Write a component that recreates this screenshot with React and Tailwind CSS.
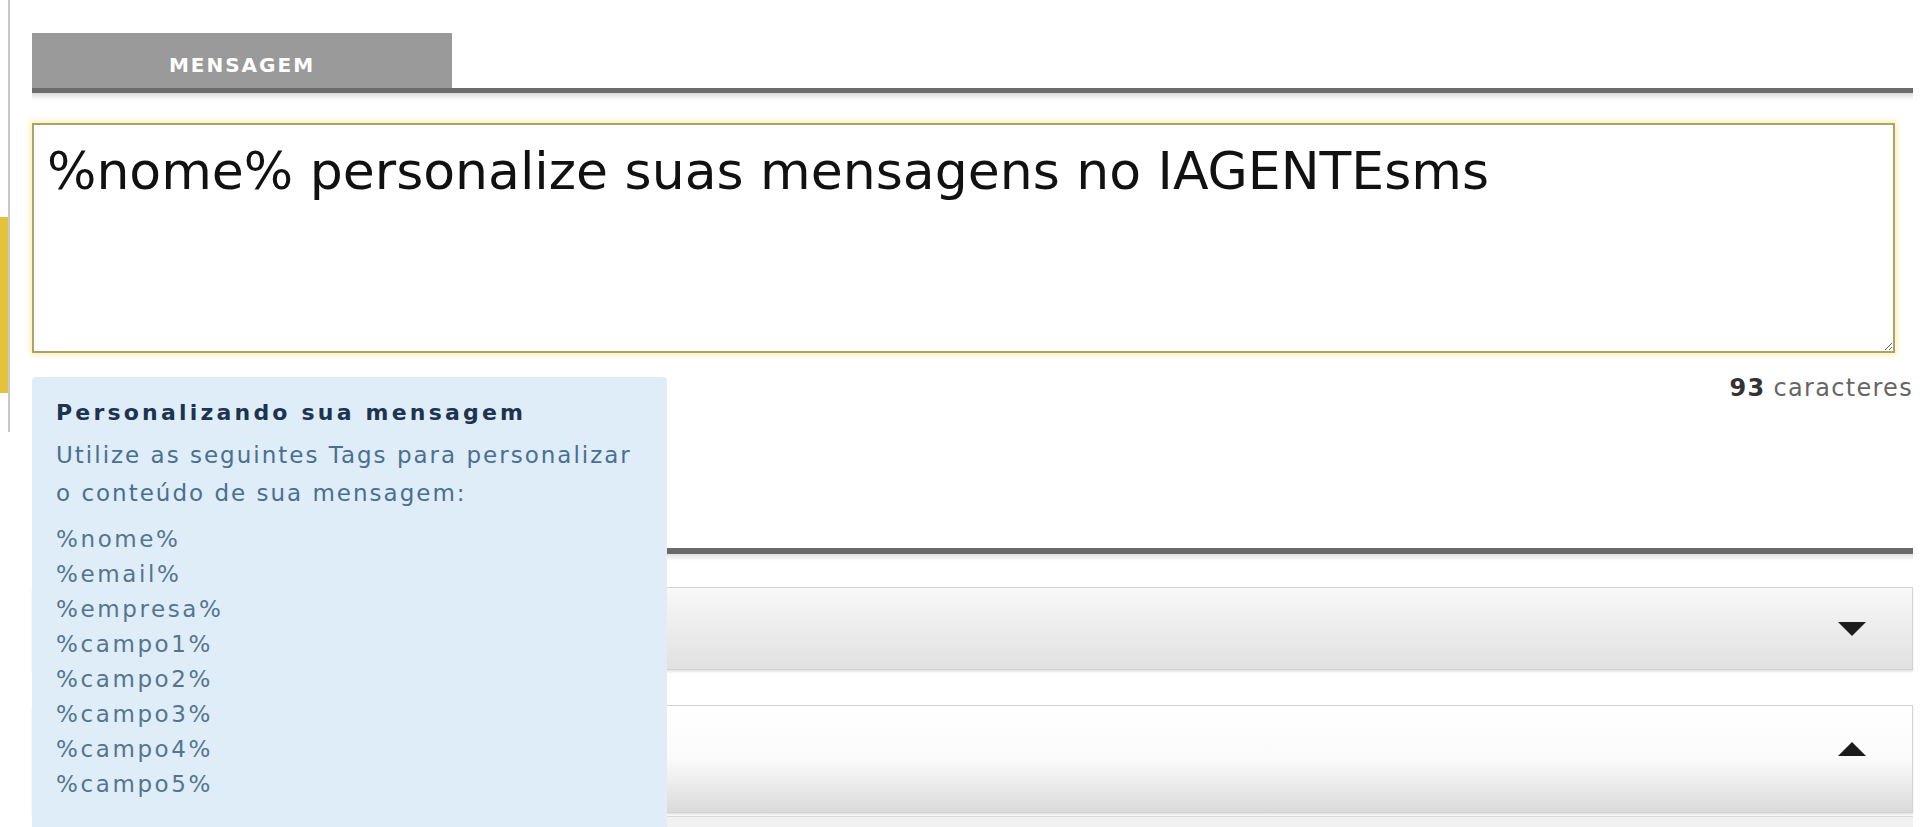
import React from "react";

const tags = [
  "%nome%",
  "%email%",
  "%empresa%",
  "%campo1%",
  "%campo2%",
  "%campo3%",
  "%campo4%",
  "%campo5%",
];

const font = { fontFamily: '"DejaVu Sans", Verdana, sans-serif' };

function Arrow({ up }) {
  return (
    <svg width="36" height="18" viewBox="0 0 36 18">
      {up ? (
        <polygon points="4,16 18,2 32,16" fill="#1c1c1c" />
      ) : (
        <polygon points="4,2 32,2 18,16" fill="#1c1c1c" />
      )}
    </svg>
  );
}

export default function App() {
  return (
    <div
      className="w-[1920px] h-[827px] overflow-hidden bg-white flex items-start"
      style={font}
    >
      {/* edge of the side column */}
      <div className="w-[10px] h-[432px] border-r-2 border-[#c9c9c9] flex flex-col shrink-0">
        <div className="h-[217px]" />
        <div className="h-[176px] bg-[#e4c23c]" />
      </div>

      <div className="ml-[22px] w-[1881px] shrink-0">
        {/* tab */}
        <div className="pt-[33px] flex">
          <div className="w-[420px] h-[55px] bg-[#9a9a9a] flex items-center justify-center pt-[8px]">
            <span className="text-white font-bold text-[20px] tracking-[2px]">
              MENSAGEM
            </span>
          </div>
        </div>
        <div className="h-[5px] bg-[#6c6c6c]" />
        <div className="h-[7px] bg-gradient-to-b from-[#d9d9d9] to-white" />

        {/* message */}
        <textarea
          readOnly
          defaultValue="%nome% personalize suas mensagens no IAGENTEsms"
          className="block mt-[23px] w-[1863px] h-[230px] border-2 border-[#aca26c] bg-white shadow-[0_0_6px_2px_#fbf0b0] pt-[16px] px-[13px] text-[52px] leading-[60px] text-[#111] outline-none resize"
          style={font}
        />

        <div className="mt-[20px] h-[30px] flex justify-end items-center text-[24px] leading-[30px] tracking-[1.3px]">
          <span className="font-bold text-[#333]">93</span>
          <span className="ml-[8px] text-[#666]">caracteres</span>
        </div>

        {/* lower section with the tag help box above it */}
        <div className="relative pt-[145px]">
          <div className="h-[6px] bg-[#6a6a6a]" />
          <div className="h-[7px] bg-gradient-to-b from-[#e2e2e2] to-white" />

          <div className="mt-[26px] h-[83px] border border-[#d3d3d3] bg-gradient-to-b from-[#f8f8f8] to-[#e1e1e1] shadow-[0_2px_2px_#e6e6e6] flex items-center justify-end pr-[42px]">
            <Arrow />
          </div>

          <div className="mt-[35px] h-[108px] border border-[#d3d3d3] bg-gradient-to-b from-white via-[#fbfbfb] to-[#dadada] shadow-[0_2px_2px_#e6e6e6] flex items-center justify-end pr-[42px] pb-[20px]">
            <Arrow up />
          </div>

          <div className="mt-[3px] h-[40px] border-t border-[#dadada] bg-[#f1f1f1]" />

          <div className="absolute left-0 top-[-26px] w-[635px] h-[470px] bg-[#dfedf9] rounded-tl-[4px] rounded-tr-[4px] pt-[18px] pl-[24px]">
            <div className="text-[22px] leading-[36px] font-bold tracking-[3.2px] text-[#1d3350]">
              Personalizando sua mensagem
            </div>
            <div className="mt-[5px] text-[23px] leading-[38px] tracking-[2px] text-[#4a6f90]">
              Utilize as seguintes Tags para personalizar
              <br />o conteúdo de sua mensagem:
            </div>
            <div className="mt-[10px] flex flex-col text-[23px] leading-[35px] tracking-[2.6px] text-[#55758e]">
              {tags.map((t) => (
                <span key={t}>{t}</span>
              ))}
            </div>
          </div>
        </div>
      </div>
    </div>
  );
}
